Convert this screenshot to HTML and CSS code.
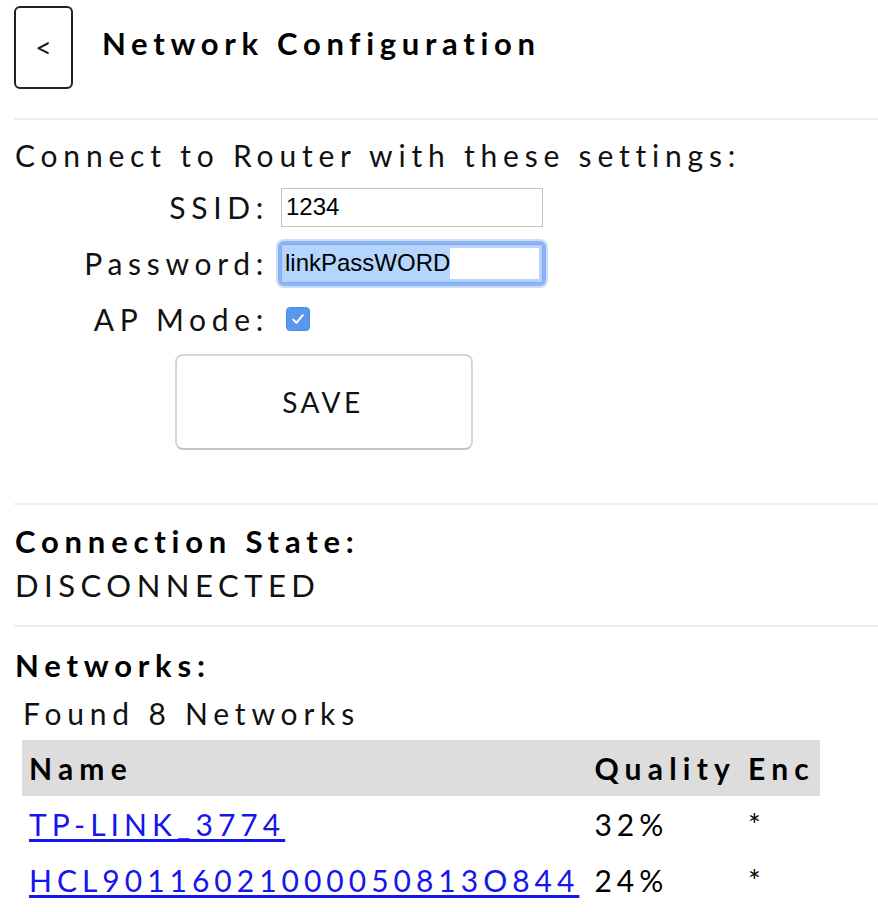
FILE: index.html
```html
<!DOCTYPE html>
<html lang="en">
<head>
<meta charset="utf-8">
<title>Network Configuration</title>
<link rel="stylesheet" href="styles.css">
</head>
<body>
<div class="page">
  <header class="top">
    <button class="back" type="button">&lt;</button>
    <h1 class="title">Network Configuration</h1>
  </header>
  <hr class="rule rule-top">
  <section class="config">
    <p class="intro">Connect to Router with these settings:</p>
    <div class="form">
      <label class="lbl" for="ssid">SSID:</label>
      <div class="field"><input id="ssid" class="txt" type="text" value="1234"></div>
      <label class="lbl">Password:</label>
      <div class="field"><span class="txt focused"><span class="sel">linkPassWORD</span></span></div>
      <label class="lbl">AP Mode:</label>
      <div class="field"><span class="check"><svg width="14" height="12" viewBox="0 0 14 12"><path d="M2.2 6.6 L5.4 9.8 L11.8 2.2" fill="none" stroke="#fff" stroke-width="2" stroke-linecap="round" stroke-linejoin="round"/></svg></span></div>
    </div>
    <button class="save" type="button">SAVE</button>
  </section>
  <hr class="rule rule-mid">
  <section class="state">
    <h2 class="head">Connection State:</h2>
    <p class="value">DISCONNECTED</p>
  </section>
  <hr class="rule rule-low">
  <section class="networks">
    <h2 class="head">Networks:</h2>
    <p class="found">Found 8 Networks</p>
    <table class="nets">
      <thead>
        <tr><th class="c-name">Name</th><th class="c-q">Quality</th><th class="c-e">Enc</th></tr>
      </thead>
      <tbody>
        <tr><td class="c-name"><a href="#">TP-LINK_3774</a></td><td class="c-q">32%</td><td class="c-e">*</td></tr>
        <tr><td class="c-name"><a href="#">HCL90116021000050813O844</a></td><td class="c-q">24%</td><td class="c-e">*</td></tr>
      </tbody>
    </table>
  </section>
</div>
</body>
</html>
```
FILE: styles.css
```css
html, body {
  margin: 0;
  padding: 0;
  background: #fff;
}
body {
  font-family: Lato, "Noto Sans", "DejaVu Sans", sans-serif;
  color: #111;
  overflow: hidden;
}
.page {
  padding: 6px 0 0 14px;
}
.top {
  display: flex;
  align-items: flex-start;
  gap: 29px;
  height: 83px;
}
.back {
  box-sizing: border-box;
  width: 59px;
  height: 83px;
  border: 2px solid #222;
  border-radius: 6px;
  background: #fff;
  font-family: Lato, sans-serif;
  font-size: 29px;
  line-height: 1;
  color: #1a1a1a;
  padding: 0 0 2px 0;
}
.title {
  margin: 19px 0 0 0;
  font-size: 31px;
  line-height: 37px;
  font-weight: 700;
  letter-spacing: 5.7px;
  color: #000;
}
.rule {
  border: 0;
  height: 2px;
  background: #eeeeee;
  margin: 0;
}
.rule-top { margin-top: 29px; }
.config {
  padding-top: 15px;
}
.intro {
  margin: 0;
  font-size: 30px;
  line-height: 40px;
  letter-spacing: 5.8px;
  padding-left: 1px;
}
.form {
  display: grid;
  grid-template-columns: 255px 300px;
  grid-auto-rows: 56px;
  column-gap: 12px;
  align-items: center;
  margin-top: 4px;
}
.lbl {
  text-align: right;
  font-size: 30px;
  letter-spacing: 5.7px;
  line-height: 40px;
}
.field {
  display: flex;
  align-items: center;
}
.txt {
  box-sizing: border-box;
  display: block;
  width: 262px;
  height: 39px;
  border: 1px solid #c4c4c4;
  padding: 0 4px;
  font-family: "Liberation Sans", Arial, sans-serif;
  font-size: 24px;
  color: #000;
  background: #fff;
  outline: none;
  margin: 0;
}
.focused {
  display: flex;
  align-items: center;
  border: 1px solid #7eaaf0;
  box-shadow: inset 0 0 0 3px #b9d2f7, 0 0 0 3px #8cb6f3, 0 0 0 5px #cadefa;
  border-radius: 3px;
  padding: 0 3px;
}
.sel {
  background: #b4d5fe;
  line-height: 32px;
}
.check {
  box-sizing: border-box;
  width: 24px;
  height: 24px;
  margin-left: 5px;
  border-radius: 4px;
  background: #5a97ef;
  border: 1px solid #4d8ae6;
  display: flex;
  align-items: center;
  justify-content: center;
}
.save {
  display: block;
  box-sizing: border-box;
  width: 298px;
  height: 96px;
  margin: 7px 0 0 161px;
  background: #fff;
  border: 2px solid #d6d6d6;
  border-bottom-color: #c4c4c4;
  border-radius: 8px;
  font-family: Lato, sans-serif;
  font-size: 28px;
  letter-spacing: 3.5px;
  color: #111;
  padding: 0 2px 0 0;
}
.rule-mid { margin-top: 53px; }
.state { padding-top: 14px; }
.head {
  margin: 0;
  font-size: 31px;
  font-weight: 700;
  letter-spacing: 5.8px;
  line-height: 44px;
  color: #000;
  padding-left: 1px;
}
.value {
  margin: 0;
  font-size: 31px;
  letter-spacing: 5.5px;
  line-height: 44px;
  padding-left: 1px;
}
.rule-low { margin-top: 18px; }
.networks { padding-top: 16px; }
.found {
  margin: 4px 0 0 9px;
  font-size: 30px;
  letter-spacing: 5.8px;
  line-height: 44px;
}
.nets {
  margin: 5px 0 0 8px;
  border-collapse: collapse;
  font-size: 30px;
  letter-spacing: 5px;
}
.nets th {
  background: #dddddd;
  height: 56px;
  text-align: left;
  font-weight: 700;
  letter-spacing: 6.2px;
  color: #000;
}
.nets td {
  height: 56px;
  color: #000;
}
.nets .c-name { padding: 0 7px 0 7px; }
.nets .c-q { padding: 0 7px 0 8px; }
.nets .c-e { padding: 0 5px 0 5px; }
.nets a {
  color: #1515ec;
  text-decoration: underline;
  text-underline-offset: 3px;
}
```
